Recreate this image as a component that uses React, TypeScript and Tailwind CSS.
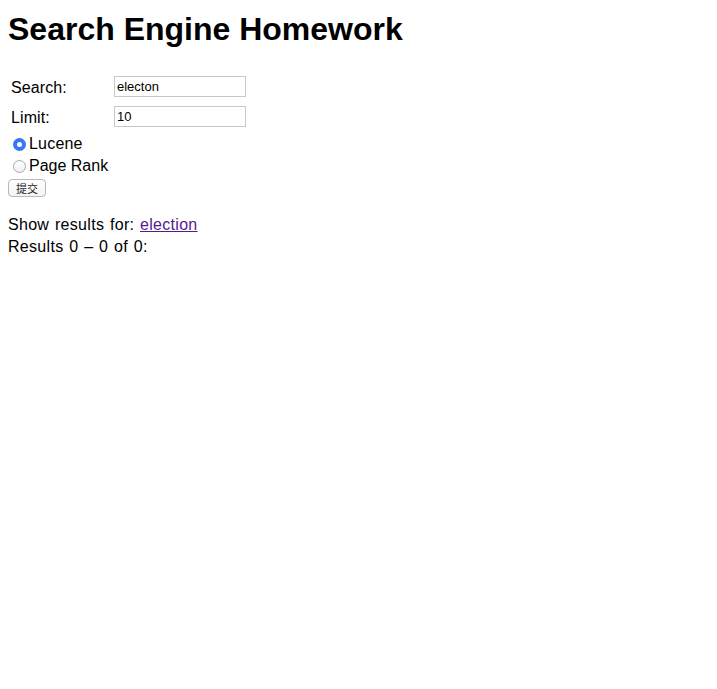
import React from "react";

export default function App() {
  return (
    <div className="min-h-[689px] bg-white p-2 text-black text-[16px] leading-[18px]" style={{ fontFamily: '"Liberation Sans", Arial, "Noto Sans CJK SC", sans-serif' }}>
      <h1 className="mt-[3px] text-[32px] font-bold leading-[37px] m-0">Search Engine Homework</h1>
      <div className="mt-[28px] flex flex-col gap-[9px] pl-[3px]">
        <div className="flex items-center">
          <span className="w-[103px] pt-[2px] tracking-[0.1px]">Search:</span>
          <input className="w-[132px] h-[21px] border border-[#c8c8c8] px-[2px] text-[13px] outline-none" defaultValue="electon" />
        </div>
        <div className="flex items-center">
          <span className="w-[103px] pt-[2px] tracking-[0.1px]">Limit:</span>
          <input className="w-[132px] h-[21px] border border-[#c8c8c8] px-[2px] text-[13px] outline-none" defaultValue="10" />
        </div>
      </div>
      <div className="mt-[8px] flex flex-col gap-[4px]">
        <label className="flex items-center tracking-[0.2px]">
          <span className="ml-[5px] w-[13px] h-[13px] rounded-full bg-[#3478f6] flex items-center justify-center">
            <span className="w-[5px] h-[5px] rounded-full bg-white" />
          </span>
          <span className="ml-[3px]">Lucene</span>
        </label>
        <label className="flex items-center">
          <span className="ml-[5px] w-[13px] h-[13px] rounded-full border border-[#a8a8a8] bg-gradient-to-b from-white to-[#f0f0f0]" />
          <span className="ml-[3px]">Page Rank</span>
        </label>
      </div>
      <button className="mt-[4px] w-[38px] h-[18px] border border-[#b8b8b8] rounded-[4px] bg-gradient-to-b from-white to-[#f4f4f4] text-[11px] leading-[14px] text-[#222]" style={{ fontFamily: '"Noto Sans CJK SC", sans-serif' }}>提交</button>
      <div className="mt-[19px] tracking-[0.3px] [word-spacing:1px]">
        Show results for: <a href="#" className="text-[#551a8b] underline">election</a>
      </div>
      <div className="mt-[4px] tracking-[0.3px] [word-spacing:1px]">Results 0 – 0 of 0:</div>
    </div>
  );
}
